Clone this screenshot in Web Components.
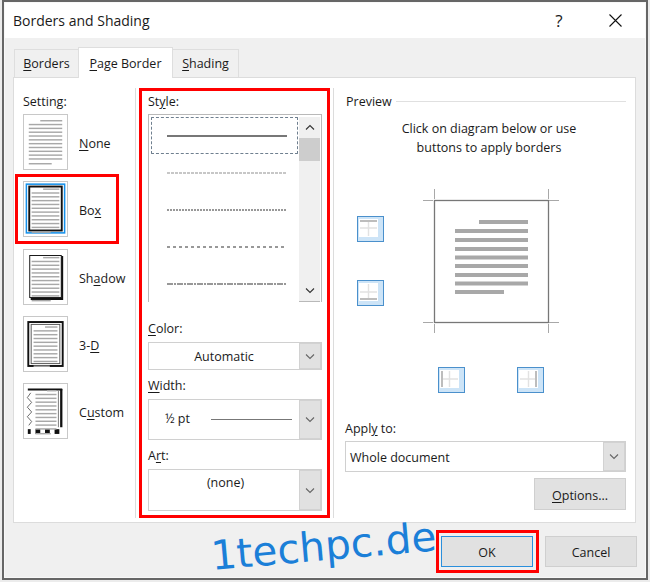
<!DOCTYPE html>
<html lang="en">
<head>
<meta charset="utf-8">
<title>Borders and Shading</title>
<style>
  html, body { margin: 0; padding: 0; }
  body {
    width: 650px;
    height: 582px;
    overflow: hidden;
    background: #ececec;
    color: #1a1a1a;
    font: 12.5px "Open Sans", "Noto Sans", sans-serif;
  }
  u { text-underline-offset: 2px; }
</style>
</head>
<body>
<dialog-window heading="Borders and Shading">
  <tab-strip slot="tabs">
    <tab-item width="65"><u>B</u>orders</tab-item>
    <tab-item width="95" active><u>P</u>age Border</tab-item>
    <tab-item width="67"><u>S</u>hading</tab-item>
  </tab-strip>

  <setting-column slot="setting">
    <field-label>Setting:</field-label>
    <setting-option kind="none"><u>N</u>one</setting-option>
    <setting-option kind="box" selected>Bo<u>x</u></setting-option>
    <setting-option kind="shadow">Sh<u>a</u>dow</setting-option>
    <setting-option kind="threed">3-<u>D</u></setting-option>
    <setting-option kind="custom">C<u>u</u>stom</setting-option>
  </setting-column>

  <style-column slot="style">
    <field-label>St<u>y</u>le:</field-label>
    <style-list></style-list>
    <field-label gap="17"><u>C</u>olor:</field-label>
    <combo-box height="28" center push>Automatic</combo-box>
    <field-label gap="6"><u>W</u>idth:</field-label>
    <combo-box height="41" push><width-sample>½ pt</width-sample></combo-box>
    <field-label gap="6">A<u>r</u>t:</field-label>
    <combo-box height="42" center top push>(none)</combo-box>
  </style-column>

  <preview-column slot="preview">
    <preview-legend>Preview</preview-legend>
    <preview-hint>Click on diagram below or use<br>buttons to apply borders</preview-hint>
    <preview-diagram></preview-diagram>
    <field-label gap="26">Appl<u>y</u> to:</field-label>
    <combo-box height="31" left>Whole document</combo-box>
    <action-row>
      <dialog-button wide><u>O</u>ptions...</dialog-button>
    </action-row>
  </preview-column>

  <footer-row slot="footer">
    <water-mark>1techpc.de</water-mark>
    <dialog-button marked>OK</dialog-button>
    <dialog-button>Cancel</dialog-button>
  </footer-row>
</dialog-window>

<script>
class ShadowBox extends HTMLElement {
  connectedCallback() {
    if (this.shadowRoot) return;
    this.attachShadow({ mode: "open" });
    this.shadowRoot.innerHTML = this.render();
  }
}

const chevron = (dir, color = "#555") => {
  const d = dir === "up" ? "M1 5.5 L5 1.5 L9 5.5" : "M1 1.5 L5 5.5 L9 1.5";
  return `<svg width="10" height="7" viewBox="0 0 10 7"><path d="${d}" fill="none" stroke="${color}" stroke-width="1.1"/></svg>`;
};

class DialogWindow extends ShadowBox {
  render() {
    return `
      <style>
        :host {
          display: block;
          width: 640px;
          height: 574px;
          margin: 3px 0 0 5px;
          background: #f0f0f0;
          box-shadow: 0 0 0 1px #f8f8f8, 0 0 0 3px #666;
        }
        #title {
          display: flex;
          align-items: center;
          height: 35px;
          padding-left: 8px;
          background: #fff;
          font-size: 14px;
        }
        #title span { flex: 1; }
        #help { width: 18px; font-size: 17px; text-align: center; margin-right: 41px; }
        #close { margin-right: 23px; display: block; }
        #tabs { padding: 9px 0 0 9px; position: relative; z-index: 1; height: 30px; }
        #panel {
          display: flex;
          width: 621px;
          padding: 10px 0 0;
          height: 434px;
          margin-left: 8px;
          background: #fff;
          border: 1px solid #dcdcdc;
        }
      </style>
      <div id="title">
        <span>${this.getAttribute("heading")}</span>
        <div id="help">?</div>
        <svg id="close" width="13" height="13" viewBox="0 0 13 13"><path d="M.5 .5 L12.5 12.5 M12.5 .5 L.5 12.5" stroke="#111" stroke-width="1.1"/></svg>
      </div>
      <div id="tabs"><slot name="tabs"></slot></div>
      <div id="panel">
        <slot name="setting"></slot>
        <slot name="style"></slot>
        <slot name="preview"></slot>
      </div>
      <slot name="footer"></slot>`;
  }
}

class TabStrip extends ShadowBox {
  render() {
    return `<style>:host { display: flex; align-items: flex-end; height: 31px; }</style><slot></slot>`;
  }
}

class TabItem extends ShadowBox {
  render() {
    return `
      <style>
        :host {
          display: block;
          box-sizing: border-box;
          width: ${this.getAttribute("width")}px;
          height: 28px;
          margin-bottom: 1px;
          padding-top: 5px;
          text-align: center;
          background: #f0f0f0;
          border: 1px solid #dedede;
          border-bottom: 0;
          margin-right: -1px;
        }
        :host([active]) {
          height: 31px;
          margin-bottom: 0;
          padding-top: 7px;
          background: #fff;
          position: relative;
          z-index: 1;
        }
      </style>
      <slot></slot>`;
  }
}

class FieldLabel extends ShadowBox {
  render() {
    const gap = this.getAttribute("gap") || 0;
    return `
      <style>
        :host { display: block; height: 18px; line-height: 20px; margin-top: ${gap}px; margin-bottom: 4px; }
      </style>
      <slot></slot>`;
  }
}

class SettingColumn extends ShadowBox {
  render() {
    return `
      <style>
        :host {
          display: flex;
          flex-direction: column;
          flex: none;
          box-sizing: border-box;
          width: 122px;
          padding: 4px 0 0 9px;
          height: 430px;
          border-right: 1px solid #dcdcdc;
        }
      </style>
      <slot></slot>`;
  }
}

const thumbLines = (x1, x2, top, count, lastEnd) => {
  let out = `<rect x="${x1 + 12}" y="${top}" width="${x2 - x1 - 12}" height="1.5"/>`;
  for (let i = 1; i <= count; i++) {
    out += `<rect x="${x1}" y="${top + i * 4}" width="${x2 - x1}" height="1.5"/>`;
  }
  out += `<rect x="${x1}" y="${top + (count + 1) * 4 + 1}" width="${lastEnd - x1}" height="1.5"/>`;
  return `<g fill="#a8a8a8">${out}</g>`;
};

const thumbs = {
  none: thumbLines(5, 40, 5, 10, 29),
  box: `<rect x="2.5" y="2" width="40" height="51" fill="none" stroke="#1490ea" stroke-width="1.6"/>
        <rect x="5.5" y="4.5" width="34" height="46" fill="#fff" stroke="#111" stroke-width="2"/>
        ${thumbLines(8, 37, 6.5, 10, 28)}`,
  shadow: `<rect x="6" y="5.5" width="33" height="44" fill="#fff" stroke="#111" stroke-width="1"/>
        <path d="M40 6 V51 H7" fill="none" stroke="#111" stroke-width="2"/>
        ${thumbLines(8, 37, 7, 10, 28)}`,
  threed: `<rect x="4.5" y="5" width="36" height="46" fill="#fff" stroke="#111" stroke-width="2"/>
        <rect x="7.5" y="7.5" width="30" height="41" fill="none" stroke="#555" stroke-width="1"/>
        ${thumbLines(10, 35, 9.5, 9, 27)}`,
  custom: `<path d="M4 5.5 H40" stroke="#111" stroke-width="2.2"/>
        <path d="M39 5 V45" stroke="#111" stroke-width="2.4"/>
        <path d="M36 7 V45" stroke="#777" stroke-width="1"/>
        <path d="M7 9 L3.5 14 L8 19 L3.5 24 L8 29 L3.5 34 L8 39 L5 43" fill="none" stroke="#666" stroke-width="1"/>
        <g fill="#111"><rect x="4" y="47" width="3" height="5"/><rect x="12" y="47" width="5" height="5"/><rect x="22" y="47" width="5" height="5"/><rect x="32" y="47" width="5" height="5"/></g>
        ${thumbLines(12, 34, 6, 10, 28)}`
};

class SettingOption extends ShadowBox {
  render() {
    const kind = this.getAttribute("kind");
    return `
      <style>
        :host { display: flex; align-items: center; height: 56px; margin-bottom: 11px; }
        :host([kind="none"]) { margin-bottom: 4px; }
        :host([selected]) {
          box-sizing: border-box;
          height: 70px;
          width: 104px;
          margin: 0 0 5px -8px;
          padding-left: 5px;
          border: 3px solid #f00;
        }
        svg { display: block; flex: none; margin-right: 11px; background: #fff; border: 1px solid #c8c8c8; box-sizing: border-box; }
        span { padding-top: 3px; }
      </style>
      <svg width="45" height="56" viewBox="0 0 45 56">${thumbs[kind]}</svg>
      <span><slot></slot></span>`;
  }
}

class StyleColumn extends ShadowBox {
  render() {
    return `
      <style>
        :host {
          display: block;
          flex: none;
          box-sizing: border-box;
          width: 191px;
          height: 430px;
          margin-left: 3px;
          padding: 1px 5px 0 6px;
          border: 3px solid #f00;
        }
      </style>
      <slot></slot>`;
  }
}

class StyleList extends ShadowBox {
  render() {
    const dashes = ["", "3 1", "2 1", "3 3", "6 1 2 1"];
    const rows = dashes.map((d, i) => `
      <div class="row${i === 0 ? " focus" : ""}">
        <svg width="120" height="2"><line x1="0" y1="1" x2="120" y2="1" stroke="${i === 1 ? "#b5b5b5" : "#777"}" stroke-width="${i === 0 ? 2 : 1.4}" stroke-dasharray="${d}"/></svg>
      </div>`).join("");
    return `
      <style>
        :host {
          display: flex;
          box-sizing: border-box;
          height: 188px;
          padding: 2px 1px 0 1px;
          border: 1px solid #b9b9b9;
          border-bottom: 0;
        }
        #rows { flex: 1; display: flex; flex-direction: column; }
        .row { display: flex; align-items: center; justify-content: center; height: 37px; padding-left: 5px; box-sizing: border-box; margin-left: 1px; }
        .row svg { display: block; }
        .focus { border: 1px dashed #6f7f8f; border-radius: 1px; }
        #bar { width: 21px; flex: none; margin-left: 1px; display: flex; flex-direction: column; background: #f0f0f0; border-bottom: 1px solid #b9b9b9; }
        .arrow { height: 21px; display: flex; align-items: center; justify-content: center; }
        #thumb { height: 23px; background: #cdcdcd; }
        #track { flex: 1; }
      </style>
      <div id="rows">${rows}</div>
      <div id="bar">
        <div class="arrow">${chevron("up", "#333")}</div>
        <div id="thumb"></div>
        <div id="track"></div>
        <div class="arrow">${chevron("down", "#333")}</div>
      </div>`;
  }
}

class ComboBox extends ShadowBox {
  render() {
    const h = this.getAttribute("height");
    return `
      <style>
        :host {
          display: flex;
          box-sizing: border-box;
          height: ${h}px;
          background: #fff;
          border: 1px solid #d0d0d0;
        }
        :host([push]) { margin-top: 5px; }
        #value { flex: 1; display: flex; align-items: center; min-width: 0; }
        :host([center]) #value { justify-content: center; }
        :host([left]) #value { padding: 2px 0 0 4px; }
        :host([top]) #value { align-items: flex-start; padding: 4px 0 0 3px; }
        #drop {
          flex: none;
          box-sizing: border-box;
          width: 22px;
          display: flex;
          align-items: center;
          justify-content: center;
          background: #e1e1e1;
          border: 1px solid #d2d2d2;
        }
      </style>
      <div id="value"><slot></slot></div>
      <div id="drop">${chevron("down", "#666")}</div>`;
  }
}

class WidthSample extends ShadowBox {
  render() {
    return `
      <style>
        :host { display: flex; align-items: center; width: 100%; padding-left: 16px; box-sizing: border-box; }
        i { display: block; width: 81px; height: 1.5px; background: #777; margin-left: 19px; }
        span { width: 27px; margin-top: -3px; }
      </style>
      <span><slot></slot></span><i></i>`;
  }
}

class PreviewColumn extends ShadowBox {
  render() {
    return `
      <style>
        :host {
          display: block;
          flex: none;
          box-sizing: border-box;
          width: 293px;
          height: 430px;
          margin-left: 3px;
          padding: 4px 0 0 11px;
          border-left: 1px solid #dcdcdc;
        }
      </style>
      <slot></slot>`;
  }
}

class PreviewLegend extends ShadowBox {
  render() {
    return `
      <style>
        :host { display: flex; align-items: center; height: 18px; gap: 4px; padding-left: 1px; }
        i { flex: 1; height: 1px; background: #e0e0e0; }
      </style>
      <slot></slot><i></i>`;
  }
}

class PreviewHint extends ShadowBox {
  render() {
    return `
      <style>
        :host { display: block; margin-top: 9px; padding-left: 7px; line-height: 19px; text-align: center; }
      </style>
      <slot></slot>`;
  }
}

class BorderToggle extends ShadowBox {
  render() {
    const side = this.getAttribute("side");
    const bars = {
      top: `<rect x="1" y="1" width="17" height="2"/>`,
      bottom: `<rect x="1" y="15" width="17" height="2"/>`,
      left: `<rect x="1" y="1" width="2" height="16"/>`,
      right: `<rect x="16" y="1" width="2" height="16"/>`
    };
    return `
      <style>
        :host {
          display: flex;
          box-sizing: border-box;
          width: 27px;
          height: 26px;
          padding: 2px 5px 4px 1px;
          background: #cde4f7;
          border: 1px solid #4a90cc;
        }
        svg { display: block; }
      </style>
      <svg width="19" height="18" viewBox="0 0 19 18">
        <rect width="19" height="18" fill="#fff"/>
        <path d="M9.5 1 V17 M1 9 H18" stroke="#e2e2e2" stroke-width="1.4"/>
        <g fill="#bdbdbd">${bars[side]}</g>
      </svg>`;
  }
}

class PreviewDiagram extends ShadowBox {
  render() {
    let text = `<rect x="56" y="31" width="49" height="4"/>`;
    [40, 49, 58, 66.5, 75, 84, 92.5].forEach(y => {
      text += `<rect x="32" y="${y}" width="73" height="4"/>`;
    });
    text += `<rect x="32" y="101" width="49" height="4"/>`;
    return `
      <style>
        :host {
          display: grid;
          grid-template-columns: 27px 136px;
          column-gap: 39px;
          margin-top: 32px;
          padding-left: 12px;
        }
        #left { display: flex; flex-direction: column; gap: 38px; padding-top: 27px; }
        #bottom { grid-column: 1 / 3; display: flex; gap: 52px; margin-top: 34px; padding-left: 81px; }
        svg { display: block; }
      </style>
      <div id="left">
        <border-toggle side="top"></border-toggle>
        <border-toggle side="bottom"></border-toggle>
      </div>
      <svg width="136" height="144" viewBox="0 0 136 144">
        <rect x="11.5" y="11.5" width="114" height="122" fill="#fff" stroke="#777" stroke-width="1.3"/>
        <g fill="#a8a8a8">${text}</g>
        <path d="M0 11.5 H10 M11.5 0 V10 M126 11.5 H136 M125.5 0 V10 M0 133.5 H10 M11.5 135 V144 M126 133.5 H136 M125.5 135 V144" stroke="#a8a8a8" stroke-width="1"/>
      </svg>
      <div id="bottom">
        <border-toggle side="left"></border-toggle>
        <border-toggle side="right"></border-toggle>
      </div>`;
  }
}

class ActionRow extends ShadowBox {
  render() {
    return `<style>:host { display: flex; justify-content: flex-end; margin-top: 6px; }</style><slot></slot>`;
  }
}

class DialogButton extends ShadowBox {
  render() {
    return `
      <style>
        :host {
          display: block;
          flex: none;
          margin-left: 6px;
        }
        #face {
          box-sizing: border-box;
          width: 92px;
          height: 31px;
          padding-top: 2px;
          display: flex;
          align-items: center;
          justify-content: center;
          background: #e1e1e1;
          border: 1px solid #cfcfcf;
        }
        :host([wide]) #face { height: 32px; }
        :host([marked]) { padding: 3px 3px 3px 2px; border: 3px solid #f00; margin-left: 0; }
        :host([marked]) #face { border: 1.5px solid #2a8fdc; }
      </style>
      <div id="face"><slot></slot></div>`;
  }
}

class FooterRow extends ShadowBox {
  render() {
    return `
      <style>
        :host {
          display: flex;
          justify-content: flex-end;
          align-items: center;
          position: relative;
          padding: 7px 8px 0 0;
        }
      </style>
      <slot></slot>`;
  }
}

class WaterMark extends ShadowBox {
  render() {
    return `
      <style>
        :host {
          position: absolute;
          left: 208px;
          top: 9px;
          font: 40.5px "DejaVu Sans", sans-serif;
          color: #1b7fd8;
          white-space: nowrap;
          transform: rotate(-5deg);
          transform-origin: left bottom;
        }
      </style>
      <slot></slot>`;
  }
}

customElements.define("dialog-window", DialogWindow);
customElements.define("tab-strip", TabStrip);
customElements.define("tab-item", TabItem);
customElements.define("field-label", FieldLabel);
customElements.define("setting-column", SettingColumn);
customElements.define("setting-option", SettingOption);
customElements.define("style-column", StyleColumn);
customElements.define("style-list", StyleList);
customElements.define("combo-box", ComboBox);
customElements.define("width-sample", WidthSample);
customElements.define("preview-column", PreviewColumn);
customElements.define("preview-legend", PreviewLegend);
customElements.define("preview-hint", PreviewHint);
customElements.define("border-toggle", BorderToggle);
customElements.define("preview-diagram", PreviewDiagram);
customElements.define("action-row", ActionRow);
customElements.define("dialog-button", DialogButton);
customElements.define("footer-row", FooterRow);
customElements.define("water-mark", WaterMark);
</script>
</body>
</html>
